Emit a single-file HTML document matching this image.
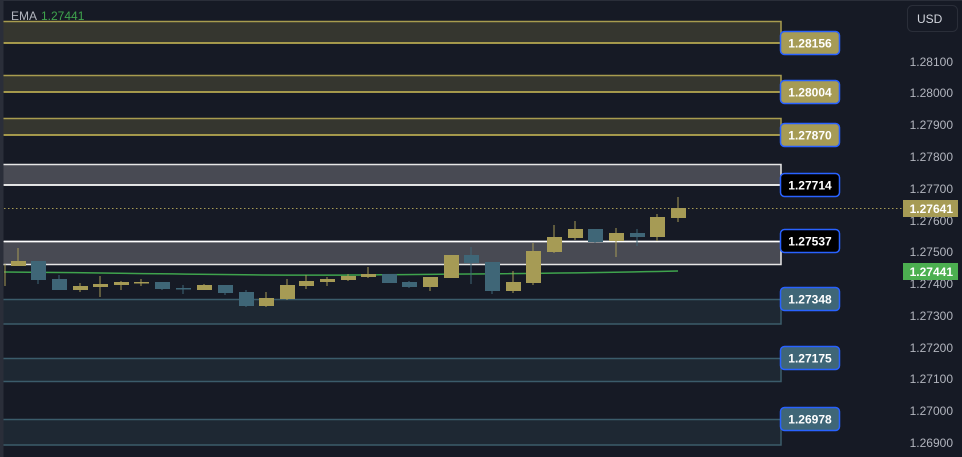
<!DOCTYPE html>
<html><head><meta charset="utf-8"><style>
html,body{margin:0;padding:0;background:#161a25;width:962px;height:457px;overflow:hidden}
svg{display:block}
text{font-family:"Liberation Sans",sans-serif}
</style></head><body>
<svg width="962" height="457" viewBox="0 0 962 457" xmlns="http://www.w3.org/2000/svg">
<rect width="962" height="457" fill="#161a25"/>
<rect x="0" y="0" width="962" height="1" fill="#2a2e39"/>
<!-- zones -->
<g stroke-width="1.5">
<rect x="2" y="21.5" width="779" height="21.5" fill="#35362f" stroke="#a89c4f"/>
<rect x="2" y="75.5" width="779" height="16.5" fill="#35362f" stroke="#a89c4f"/>
<rect x="2" y="118.5" width="779" height="16.5" fill="#35362f" stroke="#a89c4f"/>
<rect x="2" y="164.5" width="779" height="20.5" fill="#484a53" stroke="#e6e6e6"/>
<rect x="2" y="241.5" width="779" height="23" fill="#484a53" stroke="#e6e6e6"/>
<rect x="2" y="299.5" width="779" height="24.5" fill="#1e2833" stroke="#3b5c6b"/>
<rect x="2" y="358.5" width="779" height="23" fill="#1e2833" stroke="#3b5c6b"/>
<rect x="2" y="419.5" width="779" height="25.5" fill="#1e2833" stroke="#3b5c6b"/>
</g>
<line x1="4" y1="43" x2="781" y2="43" stroke="#b8aa50" stroke-width="1.5"/>
<line x1="4" y1="92" x2="781" y2="92" stroke="#b8aa50" stroke-width="1.5"/>
<line x1="4" y1="135" x2="781" y2="135" stroke="#b8aa50" stroke-width="1.5"/>
<line x1="4" y1="185" x2="781" y2="185" stroke="#ffffff" stroke-width="1.5"/>
<line x1="4" y1="241.5" x2="781" y2="241.5" stroke="#ffffff" stroke-width="1.5"/>
<rect x="0" y="0" width="3.5" height="457" fill="#2a2e39"/>
<line x1="4" y1="208.5" x2="905" y2="208.5" stroke="#a69b55" stroke-width="1" stroke-dasharray="1.5,2.5"/>
<path d="M4 272 C 150 273, 250 276, 350 275 S 550 274, 678 271" fill="none" stroke="#3fa34d" stroke-width="1.5"/>
<line x1="5" y1="264" x2="5" y2="286" stroke="#a69b55"/>
<g stroke-width="1">
<g fill="#a69b55" stroke="#a69b55">
<line x1="18" y1="248" x2="18" y2="266"/><rect x="11" y="261" width="15" height="5" stroke="none"/>
<line x1="80" y1="283" x2="80" y2="292"/><rect x="73" y="286" width="15" height="4" stroke="none"/>
<line x1="100" y1="276" x2="100" y2="297"/><rect x="93" y="284" width="15" height="3" stroke="none"/>
<line x1="121" y1="281" x2="121" y2="290"/><rect x="114" y="282" width="15" height="3" stroke="none"/>
<line x1="141" y1="279" x2="141" y2="286"/><rect x="134" y="282" width="15" height="1.5" stroke="none"/>
<line x1="204" y1="284" x2="204" y2="290"/><rect x="197" y="285" width="15" height="5" stroke="none"/>
<line x1="266" y1="292" x2="266" y2="307"/><rect x="259" y="298" width="15" height="8" stroke="none"/>
<line x1="287" y1="279" x2="287" y2="300"/><rect x="280" y="285" width="15" height="14" stroke="none"/>
<line x1="306" y1="275" x2="306" y2="289"/><rect x="299" y="281" width="15" height="5" stroke="none"/>
<line x1="327" y1="277" x2="327" y2="286"/><rect x="320" y="279" width="15" height="3" stroke="none"/>
<line x1="348" y1="274" x2="348" y2="281"/><rect x="341" y="276" width="15" height="4" stroke="none"/>
<line x1="368" y1="267" x2="368" y2="278"/><rect x="361" y="274" width="15" height="3" stroke="none"/>
<line x1="430" y1="277" x2="430" y2="291"/><rect x="423" y="277" width="15" height="10" stroke="none"/>
<rect x="444" y="255" width="15" height="23" stroke="none"/>
<line x1="513" y1="271" x2="513" y2="293"/><rect x="506" y="282" width="15" height="9" stroke="none"/>
<line x1="533" y1="243" x2="533" y2="285"/><rect x="526" y="251" width="15" height="32" stroke="none"/>
<line x1="554" y1="225" x2="554" y2="253"/><rect x="547" y="237" width="15" height="15" stroke="none"/>
<line x1="575" y1="221" x2="575" y2="240"/><rect x="568" y="229" width="15" height="9" stroke="none"/>
<line x1="616" y1="228" x2="616" y2="257"/><rect x="609" y="233" width="15" height="8" stroke="none"/>
<line x1="657" y1="214" x2="657" y2="241"/><rect x="650" y="217" width="15" height="20" stroke="none"/>
<line x1="678" y1="197" x2="678" y2="222"/><rect x="671" y="208" width="15" height="10" stroke="none"/>
</g>
<g fill="#3f6677" stroke="#3f6677">
<line x1="38" y1="261" x2="38" y2="284"/><rect x="31" y="261" width="15" height="19" stroke="none"/>
<line x1="59" y1="275" x2="59" y2="290"/><rect x="52" y="279" width="15" height="11" stroke="none"/>
<line x1="162" y1="282" x2="162" y2="290"/><rect x="155" y="282" width="15" height="7" stroke="none"/>
<line x1="183" y1="285" x2="183" y2="294"/><rect x="176" y="288" width="15" height="1.5" stroke="none"/>
<line x1="225" y1="285" x2="225" y2="295"/><rect x="218" y="285" width="15" height="8" stroke="none"/>
<line x1="246" y1="290" x2="246" y2="307"/><rect x="239" y="292" width="15" height="14" stroke="none"/>
<rect x="382" y="274" width="15" height="9" stroke="none"/>
<line x1="409" y1="281" x2="409" y2="288"/><rect x="402" y="282" width="15" height="5" stroke="none"/>
<line x1="471" y1="247" x2="471" y2="284"/><rect x="464" y="255" width="15" height="8" stroke="none"/>
<line x1="492" y1="262" x2="492" y2="294"/><rect x="485" y="262" width="15" height="29" stroke="none"/>
<line x1="595" y1="229" x2="595" y2="243"/><rect x="588" y="229" width="15" height="13" stroke="none"/>
<line x1="637" y1="229" x2="637" y2="246"/><rect x="630" y="233" width="15" height="4" stroke="none"/>
</g>
</g>
<text x="11" y="20" font-size="12" fill="#b2b5be">EMA</text>
<text x="41" y="20" font-size="12" fill="#3fa34d">1.27441</text>
<rect x="907.5" y="5.5" width="50" height="26" rx="5" fill="#161a25" stroke="#2a2e39"/>
<text x="917" y="23" font-size="12" fill="#d1d4dc">USD</text>
<g font-size="12" fill="#b2b5be" text-anchor="end">
<text x="953" y="66">1.28100</text>
<text x="953" y="97">1.28000</text>
<text x="953" y="129">1.27900</text>
<text x="953" y="161">1.27800</text>
<text x="953" y="193">1.27700</text>
<text x="953" y="225">1.27600</text>
<text x="953" y="256">1.27500</text>
<text x="953" y="288">1.27400</text>
<text x="953" y="320">1.27300</text>
<text x="953" y="352">1.27200</text>
<text x="953" y="383">1.27100</text>
<text x="953" y="415">1.27000</text>
<text x="953" y="447">1.26900</text>
</g>
<rect x="903" y="200" width="55" height="17" fill="#a69b55"/>
<text x="953" y="213" font-size="12" fill="#ffffff" text-anchor="end" font-weight="bold">1.27641</text>
<rect x="903" y="263" width="55" height="17" fill="#4caf50"/>
<text x="953" y="276" font-size="12" fill="#ffffff" text-anchor="end" font-weight="bold">1.27441</text>
<g font-size="12" font-weight="bold" fill="#ffffff" text-anchor="middle" stroke-width="1.5">
<rect x="780.5" y="31.5" width="59" height="23" rx="4" fill="#a69b55" stroke="#2962ff"/><text x="810" y="47.5">1.28156</text>
<rect x="780.5" y="80.5" width="59" height="23" rx="4" fill="#a69b55" stroke="#2962ff"/><text x="810" y="96.5">1.28004</text>
<rect x="780.5" y="123.5" width="59" height="23" rx="4" fill="#a69b55" stroke="#2962ff"/><text x="810" y="139.5">1.27870</text>
<rect x="780.5" y="173.5" width="59" height="23" rx="4" fill="#000000" stroke="#2962ff"/><text x="810" y="189.5">1.27714</text>
<rect x="780.5" y="229.5" width="59" height="23" rx="4" fill="#000000" stroke="#2962ff"/><text x="810" y="245.5">1.27537</text>
<rect x="780.5" y="287.5" width="59" height="23" rx="4" fill="#3f6677" stroke="#2962ff"/><text x="810" y="303.5">1.27348</text>
<rect x="780.5" y="346.5" width="59" height="23" rx="4" fill="#3f6677" stroke="#2962ff"/><text x="810" y="362.5">1.27175</text>
<rect x="780.5" y="407.5" width="59" height="23" rx="4" fill="#3f6677" stroke="#2962ff"/><text x="810" y="423.5">1.26978</text>
</g>
</svg>
</body></html>
